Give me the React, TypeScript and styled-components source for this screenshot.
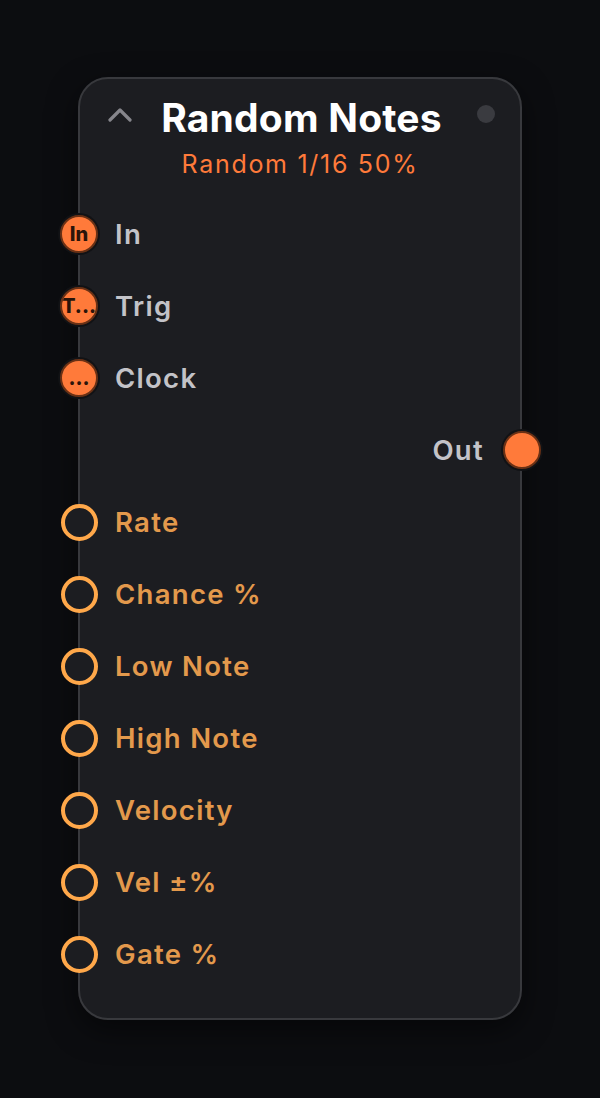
import React from "react";
import styled, {createGlobalStyle} from "styled-components";

const GlobalStyle = createGlobalStyle`
  html, body {
    margin: 0;
    padding: 0;
    background: #0c0d10;
    font-family: Inter, "Noto Sans", sans-serif;
  }
`

const Page = styled.div`
  width: 600px;
  height: 1098px;
  padding: 77px 0 0 78px;
  box-sizing: border-box;
`

const Node = styled.div`
  width: 444px;
  height: 943px;
  box-sizing: border-box;
  background: #1c1d21;
  border: 2px solid #38393d;
  border-radius: 30px;
  box-shadow: 0 10px 30px rgba(0, 0, 0, 0.5);
  padding-top: 17px;
`

const Header = styled.div`
  display: grid;
  grid-template-columns: 1fr auto 1fr;
  align-items: center;
  padding: 0 25px 0 28px;
  height: 44px;
`

const Collapse = styled.svg`
  width: 24px;
  height: 14px;
  justify-self: start;
  margin-top: -6px;
`

const Title = styled.h1`
  margin: 0;
  font-size: 39px;
  line-height: 44px;
  font-weight: 700;
  color: #ffffff;
  letter-spacing: 0.2px;
`

const StatusDot = styled.div`
  justify-self: end;
  width: 18px;
  height: 18px;
  margin-top: -8px;
  border-radius: 50%;
  background: #3a3b40;
`

const Summary = styled.p`
  margin: 10px 0 20px;
  text-align: center;
  font-size: 25px;
  line-height: 28px;
  color: #ff7a3a;
  letter-spacing: 1.7px;
`

const Row = styled.div<{ $right?: boolean }>`
  position: relative;
  height: 72px;
  display: flex;
  align-items: center;
  justify-content: ${({$right}) => $right ? 'flex-end' : 'flex-start'};
  padding: 0 36px 0 35px;
`

const Label = styled.span<{ $param?: boolean }>`
  font-size: 27.5px;
  font-weight: 600;
  color: ${({$param}) => $param ? '#e3994c' : '#c3c3c8'};
  letter-spacing: 1.3px;
`

const Port = styled.div<{ $right?: boolean }>`
  position: absolute;
  top: 50%;
  ${({$right}) => $right ? 'right: -21px;' : 'left: -20px;'}
  width: 38px;
  height: 38px;
  margin-top: -19px;
  box-sizing: border-box;
  border-radius: 50%;
  background: #ff7a3a;
  border: 2px solid #6a3115;
  box-shadow: 0 0 0 2px #111215;
  display: flex;
  align-items: center;
  justify-content: center;
  overflow: hidden;
  font-size: 20px;
  font-weight: 800;
  color: #2a140a;
  white-space: nowrap;
`

const ParamPort = styled.div`
  position: absolute;
  top: 50%;
  left: -19px;
  width: 37px;
  height: 37px;
  margin-top: -18.5px;
  box-sizing: border-box;
  border-radius: 50%;
  background: #1c1d21;
  border: 4px solid #ffa84a;
`

const inputs = [
    {name: 'In', tag: 'In'},
    {name: 'Trig', tag: 'T...'},
    {name: 'Clock', tag: '...'},
]

const params = ['Rate', 'Chance %', 'Low Note', 'High Note', 'Velocity', 'Vel ±%', 'Gate %']

const App: React.FC = () => {
    return (
        <Page>
            <GlobalStyle/>
            <Node>
                <Header>
                    <Collapse viewBox="0 0 24 14">
                        <path d="M2 12 L12 2 L22 12" fill="none" stroke="#86868c" strokeWidth="3.2"
                              strokeLinecap="round" strokeLinejoin="round"/>
                    </Collapse>
                    <Title>Random Notes</Title>
                    <StatusDot/>
                </Header>
                <Summary>Random 1/16 50%</Summary>
                {inputs.map(p => (
                    <Row key={p.name}>
                        <Port>{p.tag}</Port>
                        <Label>{p.name}</Label>
                    </Row>
                ))}
                <Row $right>
                    <Label>Out</Label>
                    <Port $right/>
                </Row>
                {params.map(p => (
                    <Row key={p}>
                        <ParamPort/>
                        <Label $param>{p}</Label>
                    </Row>
                ))}
            </Node>
        </Page>
    )
}

export default App
